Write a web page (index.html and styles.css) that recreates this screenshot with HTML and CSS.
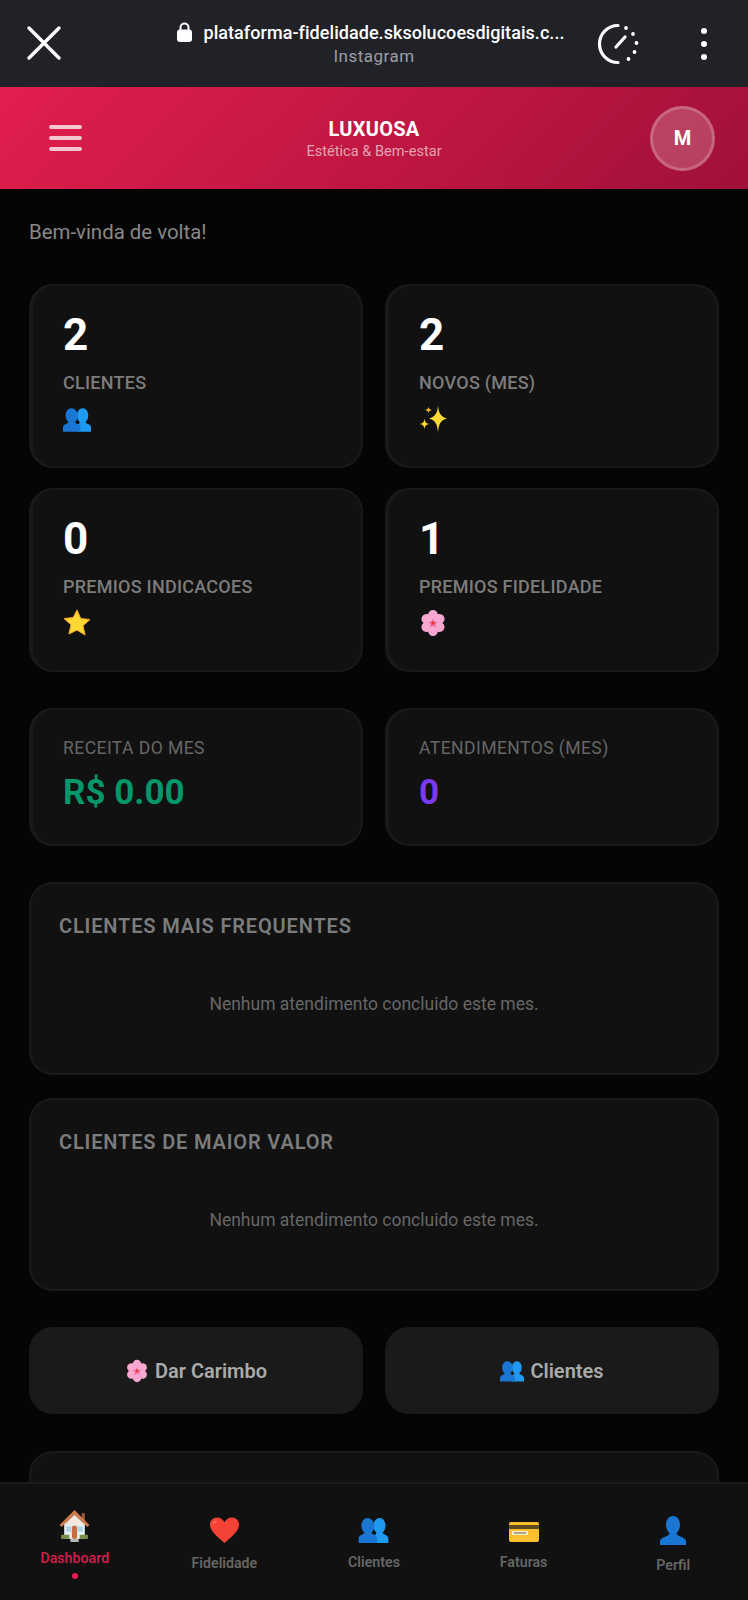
FILE: index.html
```html
<!DOCTYPE html>
<html lang="pt-BR">
<head>
<meta charset="utf-8">
<title>Luxuosa</title>
<link rel="stylesheet" href="styles.css">
</head>
<body>
<svg class="defs" width="0" height="0" aria-hidden="true">
  <symbol id="i-people" viewBox="0 0 32 28">
    <path fill="#1e9bf0" d="M22.500 1c-4 0-6.500 4-6.500 8.500 0 3.200 1.300 5.800 3 7.300.3 1.600-1 2.600-3 3.200v8h16v-4.500c0-2.500-1.500-3.500-3.500-4.300-1.700-.7-3-1.400-2.600-2.500 1.700-1.500 3-4 3-7.200C29 5 26.500 1 22.500 1z"/>
    <path fill="#1976d2" d="M9.500 1C5.500 1 3 5 3 9.500c0 3.200 1.300 5.700 3 7.200.4 1.100-.9 1.800-2.600 2.500C1.500 20 0 21 0 23.500V28h20v-4.500c0-2.500-1.500-3.500-3.400-4.300-1.700-.7-3-1.400-2.600-2.500 1.700-1.500 3-4 3-7.200C17 5 13.500 1 9.500 1z"/>
  </symbol>
  <symbol id="i-person" viewBox="0 0 30 32">
    <path fill="#1976d2" d="M15 1c-5 0-7.500 4.500-7.500 9.500 0 3.500 1.500 7 3.500 8.500.4 2-1.500 3-4.500 4.200C3 24.500 1 26 1 28.500V32h28v-3.500c0-2.500-2-4-5.500-5.300-3-1.200-4.900-2.200-4.500-4.200 2-1.500 3.500-5 3.500-8.500C22.500 5.500 20 1 15 1z"/>
  </symbol>
  <symbol id="i-star" viewBox="0 0 28 28">
    <path fill="#fdd835" stroke="#f9a825" stroke-width="1" stroke-linejoin="round" d="M14 1l3.800 8.600 9.200.9-7 6.200 2.100 9.300-8.100-4.900L5.900 25l2.100-9.300-7-6.200 9.200-.9z"/>
  </symbol>
  <symbol id="i-sparkles" viewBox="0 0 28 28">
    <path fill="#fdd835" d="M19 .5c.7 7.500 2.500 11 9 13-6.500 2-8.300 5.500-9 14-.7-8.500-2.500-12-9-14 6.500-2 8.300-5.500 9-13z"/>
    <path fill="#fbc02d" d="M9.500 1.500c.3 2.300 1 3.100 3.500 3.500-2.500.4-3.200 1.200-3.500 3.500C9.200 6.200 8.500 5.400 6 5c2.500-.4 3.200-1.200 3.500-3.500z"/>
    <path fill="#fdd835" d="M5.500 13.500c.4 3.500 1.500 5 5 5.500-3.500.5-4.600 2-5 5.500-.4-3.500-1.500-5-5-5.500 3.500-.5 4.600-2 5-5.500z"/>
  </symbol>
  <symbol id="i-flower" viewBox="0 0 28 28">
    <path fill="#f8a8d0" d="M14 1c2.500 0 4.500 1.800 4.800 4.200 2.300-.8 5 .2 6.200 2.500 1.200 2.300.4 5-1.600 6.300 2 1.300 2.800 4 1.600 6.300-1.200 2.300-3.900 3.300-6.200 2.500C18.500 25.200 16.500 27 14 27s-4.500-1.800-4.800-4.200C6.900 23.600 4.200 22.600 3 20.300 1.800 18 2.600 15.300 4.600 14 2.600 12.700 1.800 10 3 7.700c1.200-2.300 3.900-3.300 6.200-2.500C9.500 2.800 11.500 1 14 1z"/>
    <path fill="#ec6a9c" d="M14 9.500l1.400 3 3.300.4-2.400 2.200.6 3.300-2.900-1.600-2.900 1.600.6-3.300-2.400-2.200 3.300-.4z"/>
    <circle cx="14" cy="14" r="1.500" fill="#e53935"/>
  </symbol>
  <symbol id="i-house" viewBox="0 0 32 32">
    <rect x="23" y="4" width="3" height="7" fill="#a1573a"/>
    <rect x="6" y="14" width="20" height="15" fill="#e8eef0"/>
    <rect x="3" y="25" width="8" height="4" fill="#7b8f4a"/>
    <rect x="21" y="25" width="8" height="4" fill="#7b8f4a"/>
    <path fill="#cf7a4a" d="M16 1 1.500 15.500 3.500 17.500 16 5.500l12.500 12 2-2z"/>
    <path fill="#f3e9dc" d="M16 5.500 6 15h20z"/>
    <rect x="8" y="17" width="5" height="5" fill="#a9d3e8"/>
    <rect x="19" y="17" width="5" height="5" fill="#a9d3e8"/>
    <rect x="13.500" y="16" width="5" height="13" rx="2.500" fill="#c96a3f"/>
    <rect x="12" y="29" width="8" height="3" fill="#b8b8b8"/>
  </symbol>
  <symbol id="i-heart" viewBox="0 0 32 28">
    <path fill="#f44336" d="M16 27.500C9 21 1 15 1 8.500 1 4 4.300 1 8.300 1c3.200 0 6 1.800 7.700 5 1.700-3.200 4.500-5 7.700-5C27.700 1 31 4 31 8.500 31 15 23 21 16 27.500z"/>
    <path fill="#ff6f60" d="M6.500 4.500c-2 .8-3 2.600-2.900 4.600.9-1.700 2.200-2.800 4-3.200.7-.8.100-1.800-1.100-1.400z"/>
  </symbol>
  <symbol id="i-card" viewBox="0 0 32 22">
    <rect x="1" y="1" width="30" height="20" rx="2" fill="#fbc02d"/>
    <rect x="1" y="4" width="30" height="4" fill="#5d4a1e"/>
    <rect x="4" y="10" width="16" height="4" fill="#f5efd2"/>
    <rect x="6" y="11.500" width="12" height="1" fill="#6d5a2a"/>
  </symbol>
</svg>

<div class="app">
  <header class="browser">
    <svg class="browser-close" width="34" height="34" viewBox="0 0 34 34"><path d="M2 2l30 30M32 2L2 32" stroke="#fff" stroke-width="3.400" stroke-linecap="round" fill="none"/></svg>
    <div class="browser-info">
      <div class="browser-url">
        <svg width="15" height="20" viewBox="0 0 15 20"><path d="M3.500 9V5.500a4 4 0 0 1 8 0V9" stroke="#fff" stroke-width="2" fill="none"/><rect x="0" y="7.500" width="15" height="12.500" rx="3" fill="#fff"/></svg>
        <span class="url-text">plataforma-fidelidade.sksolucoesdigitais.c...</span>
      </div>
      <div class="browser-source">Instagram</div>
    </div>
    <svg class="browser-timer" width="42" height="42" viewBox="0 0 42 42">
      <path d="M21 2.500A18.500 18.500 0 0 0 21 39.500" stroke="#fff" stroke-width="3.200" stroke-linecap="round" fill="none"/>
      <path d="M19 24l9-10" stroke="#fff" stroke-width="3.200" stroke-linecap="round"/>
      <g fill="#fff"><circle cx="29" cy="5" r="1.900"/><circle cx="36" cy="11" r="1.900"/><circle cx="39.500" cy="20" r="1.900"/><circle cx="37.500" cy="29" r="1.900"/><circle cx="31.500" cy="36" r="1.900"/></g>
    </svg>
    <div class="browser-menu"><i></i><i></i><i></i></div>
  </header>

  <header class="topbar">
    <button class="burger" aria-label="Menu"><i></i><i></i><i></i></button>
    <div class="brand">
      <div class="brand-name">LUXUOSA</div>
      <div class="brand-sub">Estética &amp; Bem-estar</div>
    </div>
    <div class="avatar">M</div>
  </header>

  <main class="content">
    <p class="greeting">Bem-vinda de volta!</p>

    <section class="grid kpis">
      <article class="card kpi">
        <div class="kpi-value">2</div>
        <div class="kpi-label">CLIENTES</div>
        <svg class="emoji people-lg"><use href="#i-people"/></svg>
      </article>
      <article class="card kpi">
        <div class="kpi-value">2</div>
        <div class="kpi-label">NOVOS (MES)</div>
        <svg class="emoji"><use href="#i-sparkles"/></svg>
      </article>
      <article class="card kpi">
        <div class="kpi-value">0</div>
        <div class="kpi-label">PREMIOS INDICACOES</div>
        <svg class="emoji"><use href="#i-star"/></svg>
      </article>
      <article class="card kpi">
        <div class="kpi-value">1</div>
        <div class="kpi-label">PREMIOS FIDELIDADE</div>
        <svg class="emoji"><use href="#i-flower"/></svg>
      </article>
    </section>

    <section class="grid stats">
      <article class="card stat">
        <div class="stat-label">RECEITA DO MES</div>
        <div class="stat-value green">R$ 0.00</div>
      </article>
      <article class="card stat">
        <div class="stat-label">ATENDIMENTOS (MES)</div>
        <div class="stat-value purple">0</div>
      </article>
    </section>

    <section class="card panel">
      <h2 class="panel-title">CLIENTES MAIS FREQUENTES</h2>
      <p class="panel-empty">Nenhum atendimento concluido este mes.</p>
    </section>
    <section class="card panel second">
      <h2 class="panel-title">CLIENTES DE MAIOR VALOR</h2>
      <p class="panel-empty">Nenhum atendimento concluido este mes.</p>
    </section>

    <section class="grid actions">
      <button class="action"><svg class="btn-icon"><use href="#i-flower"/></svg>Dar Carimbo</button>
      <button class="action"><svg class="btn-icon"><use href="#i-people"/></svg>Clientes</button>
    </section>

    <section class="card panel cut"></section>
  </main>

  <nav class="tabs">
    <a class="tab active"><svg class="tab-icon house"><use href="#i-house"/></svg><span>Dashboard</span><i class="tab-dot"></i></a>
    <a class="tab"><svg class="tab-icon heart"><use href="#i-heart"/></svg><span>Fidelidade</span></a>
    <a class="tab"><svg class="tab-icon people"><use href="#i-people"/></svg><span>Clientes</span></a>
    <a class="tab"><svg class="tab-icon credit"><use href="#i-card"/></svg><span>Faturas</span></a>
    <a class="tab"><svg class="tab-icon person"><use href="#i-person"/></svg><span>Perfil</span></a>
  </nav>
</div>
</body>
</html>
```
FILE: styles.css
```css
* { box-sizing: border-box; }
html, body { margin: 0; padding: 0; background: #050505; }
body { font-family: Roboto, "Liberation Sans", sans-serif; color: #fff; }
.defs { display: block; width: 0; height: 0; overflow: hidden; }
.app { width: 748px; height: 1600px; display: flex; flex-direction: column; overflow: hidden; }

.browser { height: 87px; flex: none; background: #202228; display: flex; align-items: center; padding: 0 0 0 27px; }
.browser-close { flex: none; margin-top: -1px; }
.browser-info { width: 390px; margin: -1px 12px 0 118px; display: flex; flex-direction: column; align-items: center; }
.browser-url { display: flex; align-items: center; gap: 11px; height: 24px; margin-right: 6px; white-space: nowrap; }
.url-text { font-size: 18px; font-weight: 500; color: #fff; letter-spacing: .05px; }
.browser-source { font-size: 17px; color: #9a9ea6; line-height: 20px; margin-top: 2px; letter-spacing: .5px; }
.browser-timer { flex: none; margin-left: 16px; }
.browser-menu { display: flex; flex-direction: column; gap: 7px; margin-left: 62px; }
.browser-menu i { width: 6px; height: 6px; border-radius: 50%; background: #fff; display: block; }

.topbar { height: 102px; flex: none; background: linear-gradient(135deg, #e21e4d 0%, #a01038 100%); display: flex; align-items: center; padding: 0 33px 0 49px; }
.burger { width: 33px; background: none; border: 0; padding: 0; display: flex; flex-direction: column; gap: 7px; flex: none; }
.burger i { display: block; height: 4px; border-radius: 2px; background: rgba(255,255,255,.75); }
.brand { flex: 1; text-align: center; margin-left: 16px; }
.brand-name { font-size: 20px; font-weight: 700; line-height: 24px; letter-spacing: .3px; }
.brand-sub { font-size: 14.6px; line-height: 18px; margin-top: 1px; color: rgba(255,255,255,.6); }
.avatar { width: 65px; height: 65px; flex: none; border-radius: 50%; background: rgba(255,255,255,.2); border: 3px solid rgba(255,255,255,.2); display: flex; align-items: center; justify-content: center; font-size: 20px; font-weight: 700; }

.content { flex: 1; min-height: 0; overflow: hidden; padding: 0 29px; }
.greeting { margin: 31px 0 0; font-size: 20.4px; line-height: 24px; color: #888; }

.grid { display: grid; grid-template-columns: 334px 334px; column-gap: 22px; }
.card { background: #111; border: 2px solid #191919; border-left-width: 4px; border-radius: 24px; }
.kpis { margin-top: 40px; row-gap: 20px; }
.kpi { height: 184px; padding: 25px 0 0 30px; }
.kpi-value { font-size: 44px; font-weight: 700; line-height: 48px; color: #fff; }
.kpi-label { font-size: 18px; font-weight: 500; line-height: 22px; margin-top: 13px; color: #7c7c7c; letter-spacing: .25px; }
.emoji { display: block; width: 28px; height: 28px; margin-top: 11px; }
.people-lg { height: 25px; margin-top: 13px; }

.stats { margin-top: 36px; }
.stat { height: 138px; padding: 27px 0 0 30px; }
.stat-label { font-size: 17.6px; line-height: 22px; color: #666; letter-spacing: .4px; }
.stat-value { font-size: 35px; font-weight: 700; line-height: 42px; margin-top: 13px; }
.green { color: #059669; }
.purple { color: #7c3aed; }

.panel { margin-top: 36px; height: 193px; border-left-width: 2px; padding: 29px 0 0 28px; }
.second { margin-top: 23px; }
.panel-title { margin: 0; font-size: 20px; font-weight: 600; line-height: 26px; color: #7c7c7c; letter-spacing: .85px; }
.panel-empty { margin: 53px 28px 0 0; font-size: 17.5px; line-height: 24px; color: #666; text-align: center; }

.actions { margin-top: 36px; }
.action { height: 87px; background: #1a1a1a; border: 0; border-radius: 24px; font-family: inherit; font-size: 20px; font-weight: 600; color: #aaa; display: flex; align-items: center; justify-content: center; gap: 6px; }
.btn-icon { width: 24px; height: 24px; flex: none; }

.cut { margin-top: 37px; }

.tabs { height: 118px; flex: none; background: #111; border-top: 2px solid #1a1a1a; display: grid; grid-template-columns: repeat(5, 1fr); }
.tab { display: flex; flex-direction: column; align-items: center; justify-content: center; color: #666; font-size: 14.2px; font-weight: 600; padding-top: 4px; }
.tab span { line-height: 18px; margin-top: 10px; }
.tab-icon { display: block; }
.house { width: 33px; height: 33px; }
.heart { width: 31px; height: 28px; }
.people { width: 31px; height: 26px; }
.credit { width: 32px; height: 22px; margin-top: 4px; }
.person { width: 28px; height: 32px; }
.active { color: #d01c48; padding-top: 3px; }
.active span { margin-top: 7px; }
.tab-dot { width: 6px; height: 6px; border-radius: 50%; background: #e91e4e; margin-top: 6px; display: block; }
```
